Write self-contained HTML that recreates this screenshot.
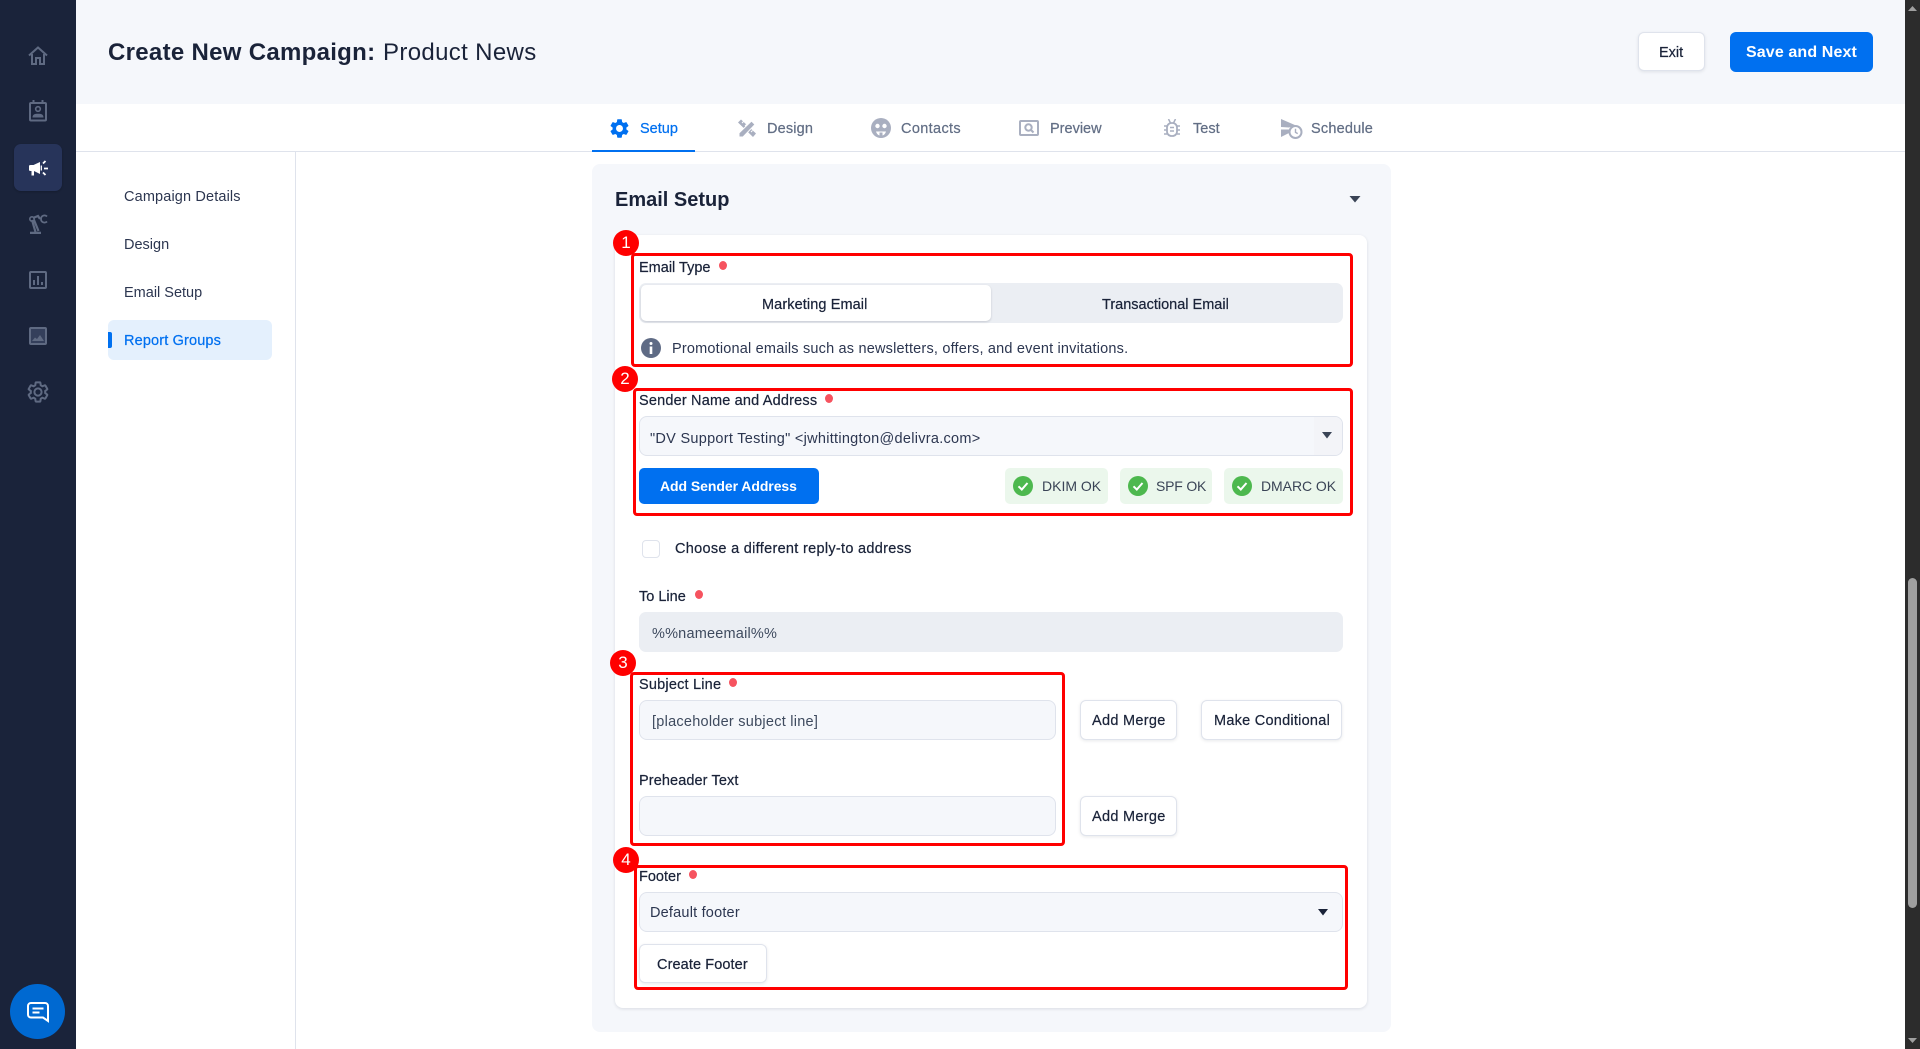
<!DOCTYPE html>
<html lang="en"><head><meta charset="utf-8"><title>Create New Campaign</title>
<style>
*{box-sizing:border-box}
html,body{margin:0;width:1920px;height:1049px;overflow:hidden;background:#fff;font-family:"Liberation Sans",Arial,sans-serif;color:#1a2339}
.a,.t,svg,.r,.n,.d{position:absolute}
.t{white-space:nowrap;font-size:14.5px;line-height:20px;margin-top:1px}
.m{-webkit-text-stroke:.22px currentColor}
.tab{color:#626e85}
.r{border:3px solid #f00;border-radius:4px;z-index:5}
.n{width:26px;height:26px;border-radius:50%;background:#f00;color:#fff;font-size:17px;line-height:26px;text-align:center;z-index:6}
.d{width:8px;height:9px;border-radius:50%;background:#f6535f}
.i{position:absolute;border:1px solid #dfe3ec;border-radius:8px;background:#f5f7fb}
.b{position:absolute;border:1px solid #dfe3ec;border-radius:6px;background:#fff;box-shadow:0 1px 3px rgba(26,35,57,.1)}
.c{position:absolute;background:#ebf7ec;border-radius:5px;top:468px;height:36px}
</style></head><body>

<!-- left rail -->
<div class="a" style="left:0;top:0;width:76px;height:1049px;background:#1a233a"></div>
<div class="a" style="left:14px;top:144px;width:48px;height:47px;background:#27345a;border-radius:7px;box-shadow:0 1px 2px rgba(0,0,0,.2)"></div>
<svg style="left:28px;top:46px" width="20" height="19" viewBox="0 0 20 19" fill="none" stroke="#5f6a82" stroke-width="2"><path d="M1 9.500 10 1.500l9 8"/><path d="M4 8v10h4v-6h4v6h4V8"/></svg>
<svg style="left:28px;top:100px" width="20" height="22" viewBox="0 0 20 22" fill="none" stroke="#5f6a82" stroke-width="2"><rect x="2" y="3" width="16" height="17.500" rx="1"/><path d="M5.500 0v3M14.500 0v3"/><circle cx="10" cy="9" r="2.300" stroke-width="1.600"/><path d="M4.500 17.500c0-3 2-3.800 5.500-3.800s5.500.8 5.500 3.800z" fill="#5f6a82" stroke="none"/></svg>
<svg style="left:28px;top:159px" width="21" height="19" viewBox="0 0 21 19" fill="#fff"><path d="M1 6.500 2.500 6h3L12 3v12L6 12v4.500H3.500V12H2.500L1 11.500z"/><path d="M13.300 6.500v5" stroke="#fff" stroke-width="1.300"/><path d="M15 4.500l2.500-2.500M16 9.500h4M15 13.500l2.500 2.500" stroke="#fff" stroke-width="1.800"/></svg>
<svg style="left:29px;top:214px" width="19" height="20" viewBox="0 0 19 20" fill="none" stroke="#5f6a82" stroke-width="2.200"><path d="M1 19h11" stroke-width="2.600"/><path d="M3 6l3.500 12M9.500 17 5 6"/><circle cx="3" cy="5" r="2.200" stroke-width="1.600"/><path d="M4 4l5-2 2 3"/><path d="M18 2.500a3.500 3.500 0 0 0-6 2.500 3.500 3.500 0 0 0 6 2.500" stroke-width="1.800"/></svg>
<svg style="left:29px;top:271px" width="18" height="18" viewBox="0 0 18 18" fill="none" stroke="#5f6a82" stroke-width="2"><rect x="1" y="1" width="16" height="16" rx="1"/><path d="M5 9v5M9 5v9M13 11v3"/></svg>
<svg style="left:29px;top:327px" width="18" height="18" viewBox="0 0 18 18" fill="none" stroke="#5f6a82" stroke-width="2"><rect x="1" y="1" width="16" height="16" rx="1" fill="#343f5b"/><path d="M3 14l3-3.500 2 1.500 3-4 4 6z" fill="#5f6a82" stroke="none"/></svg>
<svg style="left:26px;top:380px" width="24" height="24" viewBox="0 0 24 24" fill="none" stroke="#5f6a82" stroke-width="2"><path d="M19.140 12.940c.04-.3.06-.61.06-.94 0-.32-.02-.64-.07-.94l2.030-1.580c.18-.14.23-.41.12-.61l-1.920-3.320c-.12-.22-.37-.29-.59-.22l-2.390.96c-.5-.38-1.030-.7-1.620-.94l-.36-2.540c-.04-.24-.24-.41-.48-.41h-3.840c-.24 0-.43.17-.47.41l-.36 2.540c-.59.24-1.130.57-1.620.94l-2.390-.96c-.22-.08-.47 0-.59.22L2.740 8.870c-.12.21-.08.47.12.61l2.030 1.580c-.05.3-.09.63-.09.94s.02.64.07.94l-2.030 1.580c-.18.14-.23.41-.12.61l1.920 3.320c.12.22.37.29.59.22l2.390-.96c.5.38 1.030.7 1.620.94l.36 2.540c.05.24.24.41.48.41h3.840c.24 0 .44-.17.47-.41l.36-2.540c.59-.24 1.130-.56 1.620-.94l2.390.96c.22.08.47 0 .59-.22l1.920-3.320c.12-.22.07-.47-.12-.61l-2.010-1.580zM12 15.600c-1.980 0-3.600-1.620-3.600-3.600s1.620-3.600 3.600-3.600 3.600 1.620 3.600 3.600-1.620 3.600-3.600 3.600z"/></svg>
<div class="a" style="left:10px;top:984px;width:55px;height:55px;border-radius:50%;background:#0069d1"></div>
<svg style="left:26px;top:1001px" width="24" height="22" viewBox="0 0 24 22" fill="none" stroke="#fff" stroke-width="2"><path d="M5 2h14a3 3 0 0 1 3 3v15l-5-3.500H5a3 3 0 0 1-3-3V5a3 3 0 0 1 3-3z"/><path d="M6.500 7.500h11M6.500 11.500h7"/></svg>

<!-- header -->
<div class="a" style="left:76px;top:0;width:1829px;height:104px;background:#f5f7fb"></div>
<div class="t" style="left:108px;top:38px;font-size:24px;line-height:28px;font-weight:700;letter-spacing:.3px">Create New Campaign:</div>
<div class="t" style="left:383px;top:38px;font-size:24px;line-height:28px;letter-spacing:.35px">Product News</div>
<div class="b" style="left:1638px;top:32px;width:67px;height:39px"></div>
<div class="t m" style="left:1659px;top:42px">Exit</div>
<div class="a" style="left:1730px;top:32px;width:143px;height:40px;background:#0070f0;border-radius:6px"></div>
<div class="t" style="left:1746px;top:42px;font-size:16px;font-weight:700;color:#fff;letter-spacing:.12px">Save and Next</div>

<!-- tabs -->
<div class="a" style="left:76px;top:151px;width:1829px;height:1px;background:#dfe3ec"></div>
<div class="a" style="left:592px;top:150px;width:103px;height:2px;background:#0070f0"></div>
<svg style="left:608px;top:116.500px" width="23" height="23" viewBox="0 0 24 24" fill="#0070f0"><path fill-rule="evenodd" d="M19.140 12.940c.04-.3.06-.61.06-.94 0-.32-.02-.64-.07-.94l2.030-1.580c.18-.14.23-.41.12-.61l-1.920-3.320c-.12-.22-.37-.29-.59-.22l-2.390.96c-.5-.38-1.030-.7-1.620-.94l-.36-2.540c-.04-.24-.24-.41-.48-.41h-3.840c-.24 0-.43.17-.47.41l-.36 2.540c-.59.24-1.130.57-1.620.94l-2.390-.96c-.22-.08-.47 0-.59.22L2.740 8.870c-.12.21-.08.47.12.61l2.030 1.580c-.05.3-.09.63-.09.94s.02.64.07.94l-2.030 1.580c-.18.14-.23.41-.12.61l1.920 3.320c.12.22.37.29.59.22l2.390-.96c.5.38 1.030.7 1.620.94l.36 2.540c.05.24.24.41.48.41h3.840c.24 0 .44-.17.47-.41l.36-2.540c.59-.24 1.130-.56 1.620-.94l2.390.96c.22.08.47 0 .59-.22l1.920-3.320c.12-.22.07-.47-.12-.61l-2.010-1.580zM12 15.600c-1.980 0-3.600-1.620-3.600-3.600s1.620-3.600 3.600-3.600 3.600 1.620 3.600 3.600-1.620 3.600-3.600 3.600z"/></svg>
<div class="t m" style="left:640px;top:118px;color:#0070f0">Setup</div>
<svg style="left:737px;top:119px" width="20" height="19" viewBox="0 0 20 19"><path d="M1 3.500 4 .5l15 14-3 3.500z" fill="#a9afc0"/><path d="M5 4l1.500-1.500M8 7l1.500-1.500M11 10l1.500-1.500M14 13l1.500-1.500" stroke="#fff" stroke-width="1"/><path d="M2 18v-4L14.500 2l3.500 3.500L6 18z" fill="#a9afc0" stroke="#fff" stroke-width="1"/></svg>
<div class="t m tab" style="left:767px;top:118px;letter-spacing:.15px">Design</div>
<svg style="left:871px;top:118px" width="20" height="20" viewBox="0 0 20 20"><circle cx="10" cy="10" r="10" fill="#a9afc0"/><circle cx="6.500" cy="8" r="2.200" fill="#fff"/><circle cx="13.500" cy="8" r="2.200" fill="#fff"/><path d="M5 13.500h10c-.5 2-2 3.500-3.500 4V14.500h-3v3c-1.500-.5-3-2-3.500-4z" fill="#fff"/></svg>
<div class="t m tab" style="left:901px;top:118px;letter-spacing:.35px">Contacts</div>
<svg style="left:1019px;top:120px" width="20" height="16" viewBox="0 0 20 16" fill="none" stroke="#a9afc0" stroke-width="2"><rect x="1" y="1" width="18" height="14" rx="1"/><circle cx="9.500" cy="7.500" r="3.200"/><path d="M12 10l2.500 2.500"/></svg>
<div class="t m tab" style="left:1050px;top:118px">Preview</div>
<svg style="left:1163px;top:119px" width="18" height="18" viewBox="0 0 18 18" fill="none" stroke="#a9afc0" stroke-width="1.800"><rect x="4" y="4" width="10" height="13" rx="4.500"/><path d="M5.500 0l2 4M12.500 0l-2 4M1 7h3M14 7h3M1 11h3M14 11h3M1 15h3M14 15h3" stroke-width="1.500"/><path d="M7 8.500h4M7 12h4" stroke-width="1.600"/></svg>
<div class="t m tab" style="left:1193px;top:118px">Test</div>
<svg style="left:1281px;top:119px" width="23" height="20" viewBox="0 0 23 20" fill="#a9afc0"><path d="M0 0 15 6.500 8 8.500 0 8zM0 10.500h8V14L0 18z"/><circle cx="14.500" cy="13" r="6" fill="#fff" stroke="#a9afc0" stroke-width="2"/><path d="M14.500 9.800v3.500l2.200 1.300" fill="none" stroke="#a9afc0" stroke-width="1.400"/></svg>
<div class="t m tab" style="left:1311px;top:118px;letter-spacing:.2px">Schedule</div>

<!-- secondary nav -->
<div class="a" style="left:295px;top:152px;width:1px;height:897px;background:#dfe3ec"></div>
<div class="t" style="left:124px;top:186px;color:#2c3650;letter-spacing:.14px">Campaign Details</div>
<div class="t" style="left:124px;top:234px;color:#2c3650">Design</div>
<div class="t" style="left:124px;top:282px;color:#2c3650">Email Setup</div>
<div class="a" style="left:108px;top:320px;width:164px;height:40px;background:#e4f0fd;border-radius:6px"></div>
<div class="a" style="left:108px;top:332px;width:4px;height:16px;background:#0070f0;border-radius:0 2px 2px 0"></div>
<div class="t m" style="left:124px;top:330px;color:#0070f0;letter-spacing:.15px">Report Groups</div>

<!-- panel + card -->
<div class="a" style="left:592px;top:164px;width:799px;height:868px;background:#f5f7fb;border-radius:8px"></div>
<div class="t" style="left:615px;top:187px;font-size:20px;line-height:24px;font-weight:700">Email Setup</div>
<svg style="left:1349px;top:196px" width="12" height="7" viewBox="0 0 12 7"><path d="M.5 0h11L6 6.500z" fill="#3a4456"/></svg>
<div class="a" style="left:615px;top:235px;width:752px;height:773px;background:#fff;border-radius:8px;box-shadow:0 1px 3px rgba(26,35,57,.12)"></div>

<!-- email type -->
<div class="t m" style="left:639px;top:257px">Email Type</div><div class="d" style="left:719px;top:261px"></div>
<div class="a" style="left:639px;top:283px;width:704px;height:40px;background:#ebeef3;border-radius:7px"></div>
<div class="a" style="left:641px;top:285px;width:350px;height:36px;background:#fff;border-radius:5px;box-shadow:0 1px 2px rgba(26,35,57,.18)"></div>
<div class="t m" style="left:762px;top:294px;letter-spacing:.1px">Marketing Email</div>
<div class="t m" style="left:1102px;top:294px">Transactional Email</div>
<svg style="left:641px;top:338px" width="20" height="20" viewBox="0 0 20 20"><circle cx="10" cy="10" r="10" fill="#5f6b85"/><circle cx="10" cy="5.500" r="1.500" fill="#fff"/><rect x="8.700" y="8.500" width="2.600" height="7.500" fill="#fff"/></svg>
<div class="t" style="left:672px;top:338px;letter-spacing:.19px;color:#2c3650">Promotional emails such as newsletters, offers, and event invitations.</div>

<!-- sender -->
<div class="t m" style="left:639px;top:390px;letter-spacing:.18px">Sender Name and Address</div><div class="d" style="left:825px;top:394px"></div>
<div class="i" style="left:639px;top:416px;width:704px;height:40px"></div>
<div class="a" style="left:1314px;top:417px;width:28px;height:38px;background:#f3f4f8;border-radius:0 7px 7px 0"></div>
<div class="t" style="left:650px;top:428px;letter-spacing:.28px;color:#2c3650">"DV Support Testing" &lt;jwhittington@delivra.com&gt;</div>
<svg style="left:1322px;top:432px" width="10" height="7" viewBox="0 0 10 7"><path d="M0 0h10L5 6.500z" fill="#3a4456"/></svg>
<div class="a" style="left:639px;top:468px;width:180px;height:36px;background:#0070f0;border-radius:5px"></div>
<div class="t" style="left:660px;top:475px;font-size:14px;font-weight:700;color:#fff;letter-spacing:-.06px">Add Sender Address</div>
<div class="c" style="left:1005px;width:103px"></div>
<svg style="left:1013px;top:476px" width="20" height="20" viewBox="0 0 20 20"><circle cx="10" cy="10" r="10" fill="#4db84e"/><path d="M5.500 10.300 8.800 13.500 14.500 7" fill="none" stroke="#fff" stroke-width="2"/></svg>
<div class="t" style="left:1042px;top:475px;font-size:14px;color:#3a4456">DKIM OK</div>
<div class="c" style="left:1120px;width:92px"></div>
<svg style="left:1128px;top:476px" width="20" height="20" viewBox="0 0 20 20"><circle cx="10" cy="10" r="10" fill="#4db84e"/><path d="M5.500 10.300 8.800 13.500 14.500 7" fill="none" stroke="#fff" stroke-width="2"/></svg>
<div class="t" style="left:1156px;top:475px;font-size:14px;color:#3a4456;letter-spacing:-.2px">SPF OK</div>
<div class="c" style="left:1224px;width:119px"></div>
<svg style="left:1232px;top:476px" width="20" height="20" viewBox="0 0 20 20"><circle cx="10" cy="10" r="10" fill="#4db84e"/><path d="M5.500 10.300 8.800 13.500 14.500 7" fill="none" stroke="#fff" stroke-width="2"/></svg>
<div class="t" style="left:1261px;top:475px;font-size:14px;color:#3a4456;letter-spacing:-.05px">DMARC OK</div>

<!-- reply-to -->
<div class="a" style="left:642px;top:540px;width:18px;height:18px;border:1px solid #dfe3ec;border-radius:4px;background:#fff"></div>
<div class="t m" style="left:675px;top:538px;letter-spacing:.3px">Choose a different reply-to address</div>

<!-- to line -->
<div class="t m" style="left:639px;top:586px">To Line</div><div class="d" style="left:695px;top:590px"></div>
<div class="a" style="left:639px;top:612px;width:704px;height:40px;background:#ebeef3;border-radius:7px"></div>
<div class="t" style="left:652px;top:623px;letter-spacing:.2px;color:#3e4a5e">%%nameemail%%</div>

<!-- subject -->
<div class="t m" style="left:639px;top:674px;letter-spacing:.2px">Subject Line</div><div class="d" style="left:729px;top:678px"></div>
<div class="i" style="left:639px;top:700px;width:417px;height:40px"></div>
<div class="t" style="left:652px;top:711px;letter-spacing:.25px;color:#3e4a5e">[placeholder subject line]</div>
<div class="b" style="left:1080px;top:700px;width:97px;height:40px"></div>
<div class="t m" style="left:1092px;top:710px;letter-spacing:.3px">Add Merge</div>
<div class="b" style="left:1201px;top:700px;width:141px;height:40px"></div>
<div class="t m" style="left:1214px;top:710px;letter-spacing:.25px">Make Conditional</div>

<!-- preheader -->
<div class="t m" style="left:639px;top:770px;letter-spacing:.1px">Preheader Text</div>
<div class="i" style="left:639px;top:796px;width:417px;height:40px"></div>
<div class="b" style="left:1080px;top:796px;width:97px;height:40px"></div>
<div class="t m" style="left:1092px;top:806px;letter-spacing:.3px">Add Merge</div>

<!-- footer -->
<div class="t m" style="left:639px;top:866px">Footer</div><div class="d" style="left:689px;top:870px"></div>
<div class="i" style="left:639px;top:892px;width:704px;height:40px"></div>
<div class="t" style="left:650px;top:902px;letter-spacing:.2px;color:#2c3650">Default footer</div>
<svg style="left:1318px;top:909px" width="10" height="7" viewBox="0 0 10 7"><path d="M0 0h10L5 6.500z" fill="#1a2339"/></svg>
<div class="b" style="left:639px;top:944px;width:128px;height:39px"></div>
<div class="t m" style="left:657px;top:954px;letter-spacing:.1px">Create Footer</div>

<!-- annotation boxes -->
<div class="r" style="left:631px;top:253px;width:722px;height:114px"></div>
<div class="r" style="left:633px;top:388px;width:720px;height:128px"></div>
<div class="r" style="left:630px;top:672px;width:435px;height:174px"></div>
<div class="r" style="left:634px;top:865px;width:714px;height:125px"></div>
<div class="n" style="left:613px;top:230px">1</div>
<div class="n" style="left:612px;top:366px">2</div>
<div class="n" style="left:610px;top:650px">3</div>
<div class="n" style="left:613px;top:847px">4</div>

<!-- scrollbar -->
<div class="a" style="left:1905px;top:0;width:15px;height:1049px;background:#2c2c2c"></div>
<svg style="left:1907px;top:5px" width="11" height="7" viewBox="0 0 11 7"><path d="M5.500 1 10 6H1z" fill="#9f9f9f"/></svg>
<div class="a" style="left:1908px;top:578px;width:9px;height:330px;background:#9f9f9f;border-radius:5px"></div>
<svg style="left:1907px;top:1037px" width="11" height="7" viewBox="0 0 11 7"><path d="M1 1h9L5.500 6z" fill="#9f9f9f"/></svg>
</body></html>
